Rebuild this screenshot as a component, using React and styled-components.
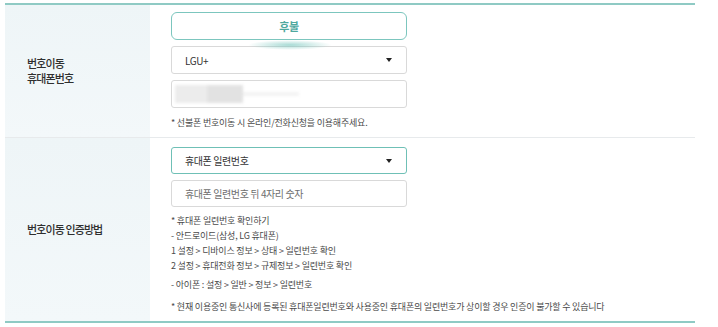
import React from "react";
import styled, { createGlobalStyle } from "styled-components";

const GlobalStyle = createGlobalStyle`
  html, body { margin: 0; padding: 0; background: #ffffff; }
  body { font-family: "Noto Sans CJK KR", "Noto Sans", sans-serif; color: #333; }
  * { box-sizing: border-box; }
`;

const Table = styled.div`
  margin: 3px 0 0 5px;
  width: 690px;
  border-top: 2px solid #8fcac4;
  border-bottom: 2px solid #8fcac4;
`;

const Row = styled.div`
  display: grid;
  grid-template-columns: 145px 1fr;
  border-bottom: ${(p) => (p.$divider ? "1px solid #e7eaec" : "none")};
`;

const Label = styled.div`
  display: flex;
  align-items: center;
  padding-left: 22px;
  background: linear-gradient(180deg, #eef5f7 0%, #f3f8fa 100%);
  font-size: 11px;
  line-height: 15px;
  letter-spacing: -0.9px;
  color: #2f2f2f;
  font-weight: 500;
`;

const Content = styled.div`
  display: flex;
  flex-direction: column;
  gap: 6px;
  padding: ${(p) => p.$pt}px 0 7px 21px;
`;

const TypeButton = styled.div`
  position: relative;
  width: 236px;
  height: 28px;
  border: 1px solid #7cc6be;
  border-radius: 6px;
  background: #fff;
  display: flex;
  align-items: center;
  justify-content: center;
  font-size: 11px;
  font-weight: 700;
  color: #4fa89e;
  letter-spacing: -0.3px;

  &::after {
    content: "";
    position: absolute;
    left: 76px;
    top: 27px;
    width: 84px;
    height: 10px;
    border-radius: 50%;
    background: radial-gradient(ellipse at center, rgba(110, 195, 185, 0.6) 0%, rgba(110, 195, 185, 0) 70%);
  }
`;

const Field = styled.div`
  width: 236px;
  height: ${(p) => p.$h || 28}px;
  border: 1px solid ${(p) => (p.$active ? "#6fc0b6" : "#d9d9d9")};
  border-radius: 3px;
  background: #fff;
  padding: 0 13px 0 13px;
  display: flex;
  align-items: center;
  justify-content: space-between;
  font-size: 10px;
  letter-spacing: -0.4px;
  color: ${(p) => (p.$muted ? "#6e6e6e" : "#333")};
`;

const Arrow = styled.span`
  width: 0;
  height: 0;
  border-left: 3px solid transparent;
  border-right: 3px solid transparent;
  border-top: 4px solid #222;
  margin-right: 1px;
`;

const Blur = styled.div`
  display: flex;
  align-items: center;
  margin-left: -10px;
  filter: blur(1.5px);
`;

const BlurBlock = styled.span`
  display: block;
  width: ${(p) => p.$w}px;
  height: ${(p) => p.$hh || 18}px;
  background: ${(p) => p.$c};
`;

const Notes = styled.div`
  margin-top: ${(p) => p.$mt || 0}px;
  font-size: 9px;
  line-height: ${(p) => p.$lh || 14}px;
  letter-spacing: -0.2px;
  color: #4a4a4a;
`;

const NoteLine = styled.div`
  margin-top: ${(p) => p.$mt || 0}px;
`;

export default function App() {
  return (
    <>
      <GlobalStyle />
      <Table>
        <Row $divider>
          <Label>
            번호이동
            <br />
            휴대폰번호
          </Label>
          <Content $pt={7}>
            <TypeButton>후불</TypeButton>
            <Field>
              <span>LGU+</span>
              <Arrow />
            </Field>
            <Field>
              <Blur>
                <BlurBlock $w={32} $c="#ececec" />
                <BlurBlock $w={36} $c="#e2e2e2" />
                <BlurBlock $w={56} $hh={4} $c="#f3f3f3" />
              </Blur>
            </Field>
            <Notes $mt={2}>* 선불폰 번호이동 시 온라인/전화신청을 이용해주세요.</Notes>
          </Content>
        </Row>
        <Row>
          <Label>번호이동 인증방법</Label>
          <Content $pt={9}>
            <Field $active $h={27}>
              <span>휴대폰 일련번호</span>
              <Arrow />
            </Field>
            <Field $muted $h={27}>
              <span>휴대폰 일련번호 뒤 4자리 숫자</span>
            </Field>
            <Notes $lh={15}>
              <NoteLine>* 휴대폰 일련번호 확인하기</NoteLine>
              <NoteLine>- 안드로이드(삼성, LG 휴대폰)</NoteLine>
              <NoteLine>1 설정 &gt; 디바이스 정보 &gt; 상태 &gt; 일련번호 확인</NoteLine>
              <NoteLine>2 설정 &gt; 휴대전화 정보 &gt; 규제정보 &gt; 일련번호 확인</NoteLine>
              <NoteLine $mt={4}>- 아이폰 : 설정 &gt; 일반 &gt; 정보 &gt; 일련번호</NoteLine>
              <NoteLine $mt={7}>* 현재 이용중인 통신사에 등록된 휴대폰일련번호와 사용중인 휴대폰의 일련번호가 상이할 경우 인증이 불가할 수 있습니다</NoteLine>
            </Notes>
          </Content>
        </Row>
      </Table>
    </>
  );
}
